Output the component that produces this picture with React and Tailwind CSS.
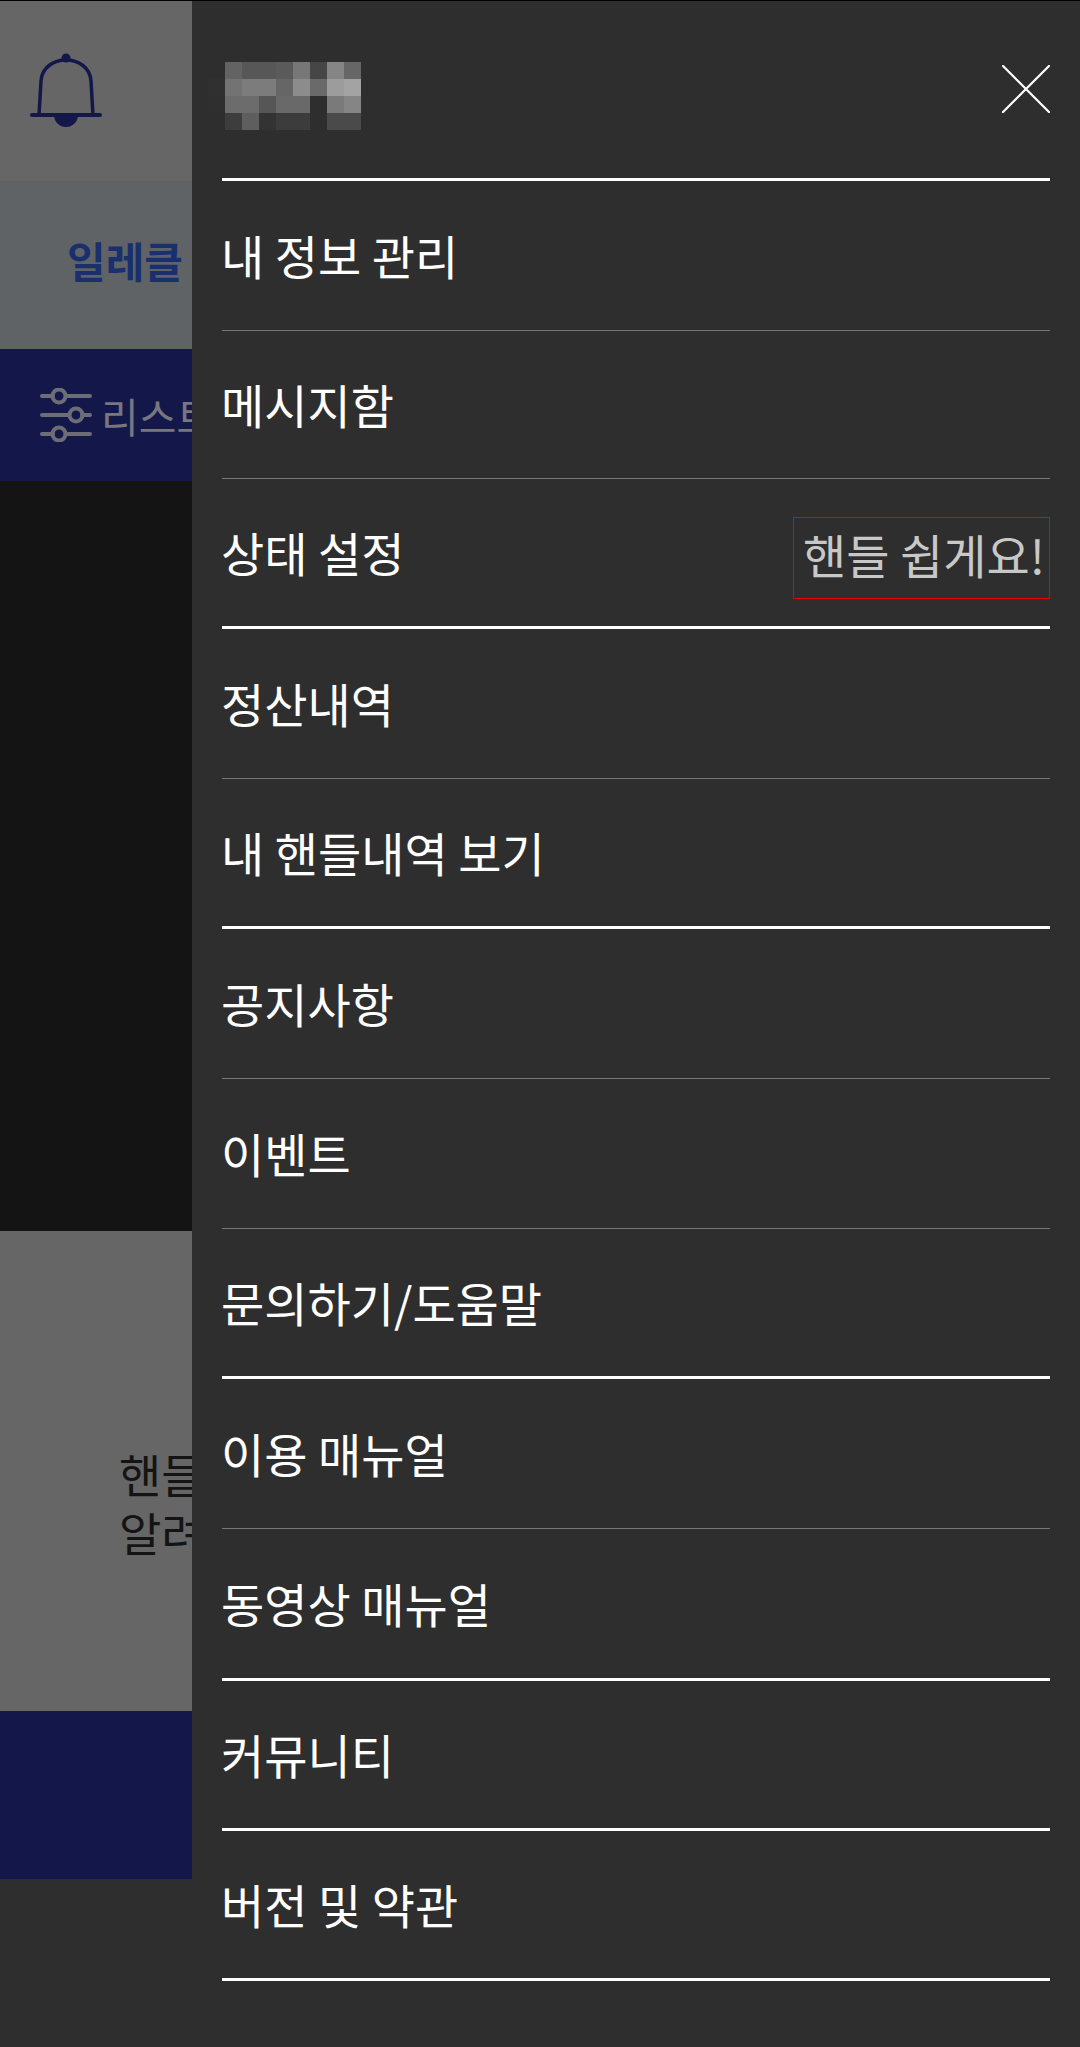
const FONT = "font-['Noto_Sans_CJK_KR','Noto_Sans',sans-serif]";

// Mosaic over the blurred-out user name, cell by cell
const MOSAIC = [
  ["#2e2e2e", "#636363", "#575757", "#575757", "#5a5a5a", "#777777", "#464646", "#858585", "#666666"],
  ["#303030", "#737373", "#7c7c7c", "#7c7c7c", "#666666", "#8c8c8c", "#6a6a6a", "#9c9c9c", "#a3a3a3"],
  ["#2f2f2f", "#6c6c6c", "#6c6c6c", "#565656", "#696969", "#696969", "#2e2e2e", "#7a7a7a", "#858585"],
  ["#2e2e2e", "#3d3d3d", "#5e5e5e", "#333333", "#3c3c3c", "#3c3c3c", "#2e2e2e", "#4a4a4a", "#4a4a4a"],
];

const MENU = [
  { label: "내 정보 관리", h: "h-[150px]" },
  { label: "메시지함", h: "h-[148px]" },
  { label: "상태 설정", h: "h-[150px]", thick: true, status: "핸들 쉽게요!" },
  { label: "정산내역", h: "h-[150px]" },
  { label: "내 핸들내역 보기", h: "h-[150px]", thick: true },
  { label: "공지사항", h: "h-[150px]" },
  { label: "이벤트", h: "h-[150px]" },
  { label: "문의하기/도움말", h: "h-[150px]", thick: true },
  { label: "이용 매뉴얼", h: "h-[150px]" },
  { label: "동영상 매뉴얼", h: "h-[152px]", thick: true },
  { label: "커뮤니티", h: "h-[150px]", thick: true },
  { label: "버전 및 약관", h: "h-[150px]", thick: true },
];

const BellIcon = () => (
  <svg width="72" height="76" viewBox="0 0 72 76" fill="none" className="block">
    <path d="M9 62 L11 28 C12 14 24 7 36 7 C48 7 60 14 61 28 L63 62" stroke="#14174a" strokeWidth="3.5" />
    <path d="M2 62 H70" stroke="#14174a" strokeWidth="4" strokeLinecap="round" />
    <path d="M24 62 A12 12 0 0 0 48 62 Z" fill="#14174a" />
    <circle cx="36" cy="5" r="4.5" fill="#14174a" />
  </svg>
);

const FilterIcon = () => (
  <svg width="52" height="54" viewBox="0 0 52 54" fill="none" stroke="#6d6d78" strokeWidth="4" strokeLinecap="round" className="shrink-0">
    <path d="M2 8 H13 M26 8 H50" />
    <circle cx="19" cy="8" r="6.5" />
    <path d="M2 27 H29 M42 27 H50" />
    <circle cx="36" cy="27" r="6.5" />
    <path d="M2 46 H13 M26 46 H50" />
    <circle cx="19" cy="46" r="6.5" />
  </svg>
);

const CloseIcon = () => (
  <svg width="48" height="48" viewBox="0 0 48 48" fill="none" stroke="#ffffff" strokeWidth="2.2" className="block">
    <path d="M0 0 L48 48 M48 0 L0 48" />
  </svg>
);

const MenuRow = ({ item }) => (
  <div
    className={`flex items-center justify-between ${item.h} ${
      item.thick ? "border-b-[3px] border-white" : "border-b border-[#777777]"
    }`}
  >
    <span className="ml-[-1px] pb-[3px] text-[47px] leading-none text-white">{item.label}</span>
    {item.status && (
      <span className="mt-[10px] flex h-[82px] w-[257px] items-center justify-center border border-[#ee0000] pb-[8px] pl-[5px] text-[47px] leading-none whitespace-nowrap text-[#c8c8c8]">
        {item.status}
      </span>
    )}
  </div>
);

export default function App() {
  return (
    <div className={`${FONT} flex h-[2047px] w-[1080px] overflow-hidden border-t border-black bg-[#2e2e2e]`}>
      {/* Page behind the dimmed drawer, cut off by it */}
      <div className="w-[192px] shrink-0 overflow-hidden">
        <div className="flex h-[180px] items-start bg-[#666666] pt-[52px] pl-[30px]">
          <BellIcon />
        </div>
        <div className="flex h-[168px] items-center bg-[#5f6366] pl-[67px] pb-[10px]">
          <span className="whitespace-nowrap text-[42px] font-bold leading-none text-[#1a2f6e]">일레클</span>
        </div>
        <div className="flex h-[132px] items-center gap-[9px] bg-[#14174a] pl-[40px]">
          <FilterIcon />
          <span className="whitespace-nowrap text-[41px] leading-none text-[#77777f]">리스트</span>
        </div>
        <div className="h-[750px] bg-[#141414]" />
        <div className="flex h-[480px] items-center bg-[#666666] pl-[119px] pt-[62px]">
          <p className="whitespace-nowrap text-[46px] leading-[58px] text-[#141414]">
            핸들을
            <br />
            알려요
          </p>
        </div>
        <div className="h-[168px] bg-[#14174a]" />
      </div>

      {/* Drawer */}
      <div className="flex-1 pl-[30px] pr-[30px]">
        <div className="flex h-[180px] items-start justify-between border-b-[3px] border-white">
          <div className="mt-[61px] ml-[-14px] grid grid-cols-[repeat(9,17px)]">
            {MOSAIC.flat().map((c, i) => (
              <div key={i} className="h-[17px]" style={{ background: c }} />
            ))}
          </div>
          <div className="mt-[64px]">
            <CloseIcon />
          </div>
        </div>
        {MENU.map((item) => (
          <MenuRow key={item.label} item={item} />
        ))}
      </div>
    </div>
  );
}
